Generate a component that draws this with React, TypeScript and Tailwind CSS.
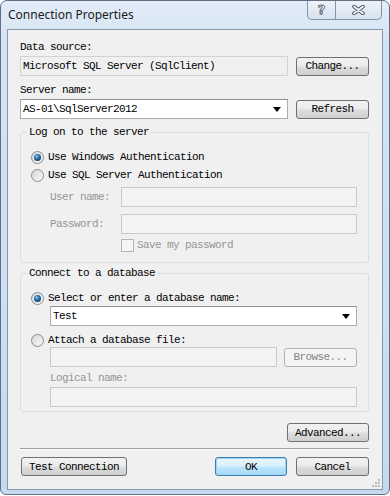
import React from "react";

const mono = "font-['Liberation_Mono',monospace] text-[11px] tracking-[-0.6px] leading-[14px]";

const Radio = ({ checked }: { checked?: boolean }) => (
    <svg width="13" height="13" viewBox="0 0 13 13" className="shrink-0">
        <defs>
            <linearGradient id={checked ? "rbg1" : "rbg0"} x1="0" y1="0" x2="1" y2="1">
                <stop offset="0" stopColor="#d4d4d4" />
                <stop offset="1" stopColor="#fbfbfb" />
            </linearGradient>
            <radialGradient id="rdot" cx="0.4" cy="0.35" r="0.65">
                <stop offset="0" stopColor="#8fd0f5" />
                <stop offset="0.45" stopColor="#2f7fb8" />
                <stop offset="1" stopColor="#123f6a" />
            </radialGradient>
        </defs>
        <circle cx="6.5" cy="6.5" r="6" fill={`url(#${checked ? "rbg1" : "rbg0"})`} stroke="#8a8a8a" />
        {checked && <circle cx="6.5" cy="6.5" r="3.5" fill="url(#rdot)" />}
    </svg>
);

const Arrow = () => (
    <svg width="8" height="5" viewBox="0 0 8 5" className="shrink-0">
        <path d="M0 0 L8 0 L4 5 Z" fill="#000" />
    </svg>
);

const Btn = ({ children, className, primary, disabled }: { children: React.ReactNode; className?: string; primary?: boolean; disabled?: boolean }) => {
    let look = "border-[#707070] bg-[linear-gradient(#f2f2f2_0%,#ebebeb_48%,#dddddd_52%,#cfcfcf_100%)] text-black";
    if (primary) look = "border-[#3c7fb1] bg-[linear-gradient(#eaf6fd_0%,#d9f0fc_48%,#bee6fd_52%,#a7d9f5_100%)] text-black shadow-[inset_0_0_0_1px_#9fd5f0]";
    if (disabled) look = "border-[#adb2b5] bg-[#f4f4f4] text-[#838383]";
    return (
        <div className={`h-[19px] flex items-center justify-center rounded-[3px] border ${look} ${mono} ${className ?? ""}`}>
            {children}
        </div>
    );
};

const Box = ({ className, disabled, children }: { className?: string; disabled?: boolean; children?: React.ReactNode }) => (
    <div className={`h-[20px] flex items-center px-[2px] border ${disabled ? "border-[#c9c9c9] bg-[#f3f3f3]" : "border-[#abadb3] border-t-[#8e9299] bg-white"} ${className ?? ""}`}>
        {children}
    </div>
);

const App = () => {
    return (
        <div className="w-[390px] h-[496px] bg-white">
            <div className="w-[390px] h-[495px] flex flex-col rounded-t-[7px] rounded-b-[6px] border border-[#5f7085] bg-[linear-gradient(180deg,#e3edf8_0%,#d4e3f3_8%,#cddff2_60%,#c6d9ef_100%)]">
                {/* title bar */}
                <div className="h-[28px] flex items-start shrink-0">
                    <div className="pl-[7px] pt-[6px] font-['Noto_Sans',sans-serif] text-[12px] leading-[16px] text-[#1b1b1b]">
                        Connection Properties
                    </div>
                    <div className="ml-auto mr-[7px] flex h-[19px] border border-t-0 border-[#8393a8] rounded-b-[5px] bg-[linear-gradient(#eef3f9,#d7e2ef)] overflow-hidden">
                        <div className="w-[28px] flex items-center justify-center border-r border-[#8393a8] font-['DejaVu_Sans',sans-serif] text-[13px] font-bold text-white [-webkit-text-stroke:0.8px_#4c5666]">
                            ?
                        </div>
                        <div className="w-[45px] flex items-center justify-center">
                            <svg width="13" height="10" viewBox="0 0 13 10">
                                <path d="M2 1.5 L11 8.5 M11 1.5 L2 8.5" stroke="#4c5666" strokeWidth="3.6" strokeLinecap="round" />
                                <path d="M2 1.5 L11 8.5 M11 1.5 L2 8.5" stroke="#ffffff" strokeWidth="1.6" strokeLinecap="round" />
                            </svg>
                        </div>
                    </div>
                </div>

                {/* client area */}
                <div className={`mx-[6px] h-[461px] border border-[#8796aa] bg-[#f0f0f0] flex flex-col pl-[12px] pr-[13px] pt-[10px] relative ${mono}`}>
                    <div className="h-[14px]">Data source:</div>
                    <div className="mt-[2px] h-[20px] flex items-center justify-between">
                        <div className="w-[268px] h-[20px] flex items-center px-[2px] border border-[#d2d2d2] bg-[#f0f0f0]">
                            Microsoft SQL Server (SqlClient)
                        </div>
                        <Btn className="w-[73px]">Change...</Btn>
                    </div>

                    <div className="mt-[7px] h-[14px]">Server name:</div>
                    <div className="mt-[2px] h-[20px] flex items-center justify-between">
                        <Box className="w-[268px]">
                            <span>AS-01\SqlServer2012</span>
                            <span className="ml-auto mr-[4px]"><Arrow /></span>
                        </Box>
                        <Btn className="w-[73px]">Refresh</Btn>
                    </div>

                    {/* Log on */}
                    <fieldset className="mt-[6px] border border-[#d5dfe5] rounded-[3px] px-[6px] pt-[9px] pb-[10px]">
                        <legend className="px-[2px] h-[14px]">Log on to the server</legend>
                        <div className="pl-[4px] flex flex-col">
                            <div className="h-[18px] flex items-center gap-[4px]">
                                <Radio checked />
                                <span>Use Windows Authentication</span>
                            </div>
                            <div className="h-[18px] flex items-center gap-[4px]">
                                <Radio />
                                <span>Use SQL Server Authentication</span>
                            </div>
                            <div className="mt-[3px] h-[19px] flex items-center">
                                <span className="w-[90px] pl-[19px] text-[#959595]">User name:</span>
                                <Box disabled className="w-[236px] h-[19px]" />
                            </div>
                            <div className="mt-[8px] h-[20px] flex items-center">
                                <span className="w-[90px] pl-[19px] text-[#959595]">Password:</span>
                                <Box disabled className="w-[236px]" />
                            </div>
                            <div className="mt-[4px] h-[14px] flex items-center pl-[90px] gap-[3px]">
                                <div className="w-[13px] h-[13px] border border-[#b4b4b4] bg-[#f4f4f4]" />
                                <span className="text-[#959595]">Save my password</span>
                            </div>
                        </div>
                    </fieldset>

                    {/* Connect */}
                    <fieldset className="mt-[3px] border border-[#d5dfe5] rounded-[3px] px-[6px] pt-[10px] pb-[4px]">
                        <legend className="px-[2px] h-[14px]">Connect to a database</legend>
                        <div className="pl-[4px] flex flex-col">
                            <div className="h-[16px] flex items-center gap-[4px]">
                                <Radio checked />
                                <span>Select or enter a database name:</span>
                            </div>
                            <div className="pl-[19px]">
                                <Box className="w-[307px]">
                                    <span>Test</span>
                                    <span className="ml-auto mr-[4px]"><Arrow /></span>
                                </Box>
                            </div>
                            <div className="mt-[7px] h-[14px] flex items-center gap-[4px]">
                                <Radio />
                                <span>Attach a database file:</span>
                            </div>
                            <div className="pl-[19px] h-[20px] flex items-center">
                                <Box disabled className="w-[227px]" />
                                <Btn disabled className="ml-[7px] w-[73px]">Browse...</Btn>
                            </div>
                            <div className="mt-[4px] h-[14px] pl-[19px] text-[#959595]">Logical name:</div>
                            <div className="mt-[2px] pl-[19px]">
                                <Box disabled className="w-[307px]" />
                            </div>
                        </div>
                    </fieldset>

                    <div className="mt-[11px] flex justify-end">
                        <Btn className="w-[82px]">Advanced...</Btn>
                    </div>

                    <div className="mt-[6px] h-[2px] border-t border-[#a0a0a0] border-b border-b-white" />

                    <div className="mt-[7px] flex items-center">
                        <Btn className="w-[106px] ml-[1px]">Test Connection</Btn>
                        <Btn primary className="ml-auto w-[72px]">OK</Btn>
                        <Btn className="ml-[9px] w-[73px]">Cancel</Btn>
                    </div>

                    {/* size grip */}
                    <div className="absolute right-[2px] bottom-[2px] grid grid-cols-3 gap-[1px]">
                        <span className="w-[2px] h-[2px]" />
                        <span className="w-[2px] h-[2px]" />
                        <span className="w-[2px] h-[2px] bg-[#b8b8b8]" />
                        <span className="w-[2px] h-[2px]" />
                        <span className="w-[2px] h-[2px] bg-[#b8b8b8]" />
                        <span className="w-[2px] h-[2px] bg-[#b8b8b8]" />
                        <span className="w-[2px] h-[2px] bg-[#b8b8b8]" />
                        <span className="w-[2px] h-[2px] bg-[#b8b8b8]" />
                        <span className="w-[2px] h-[2px] bg-[#b8b8b8]" />
                    </div>
                </div>
            </div>
        </div>
    );
};

export default App;
